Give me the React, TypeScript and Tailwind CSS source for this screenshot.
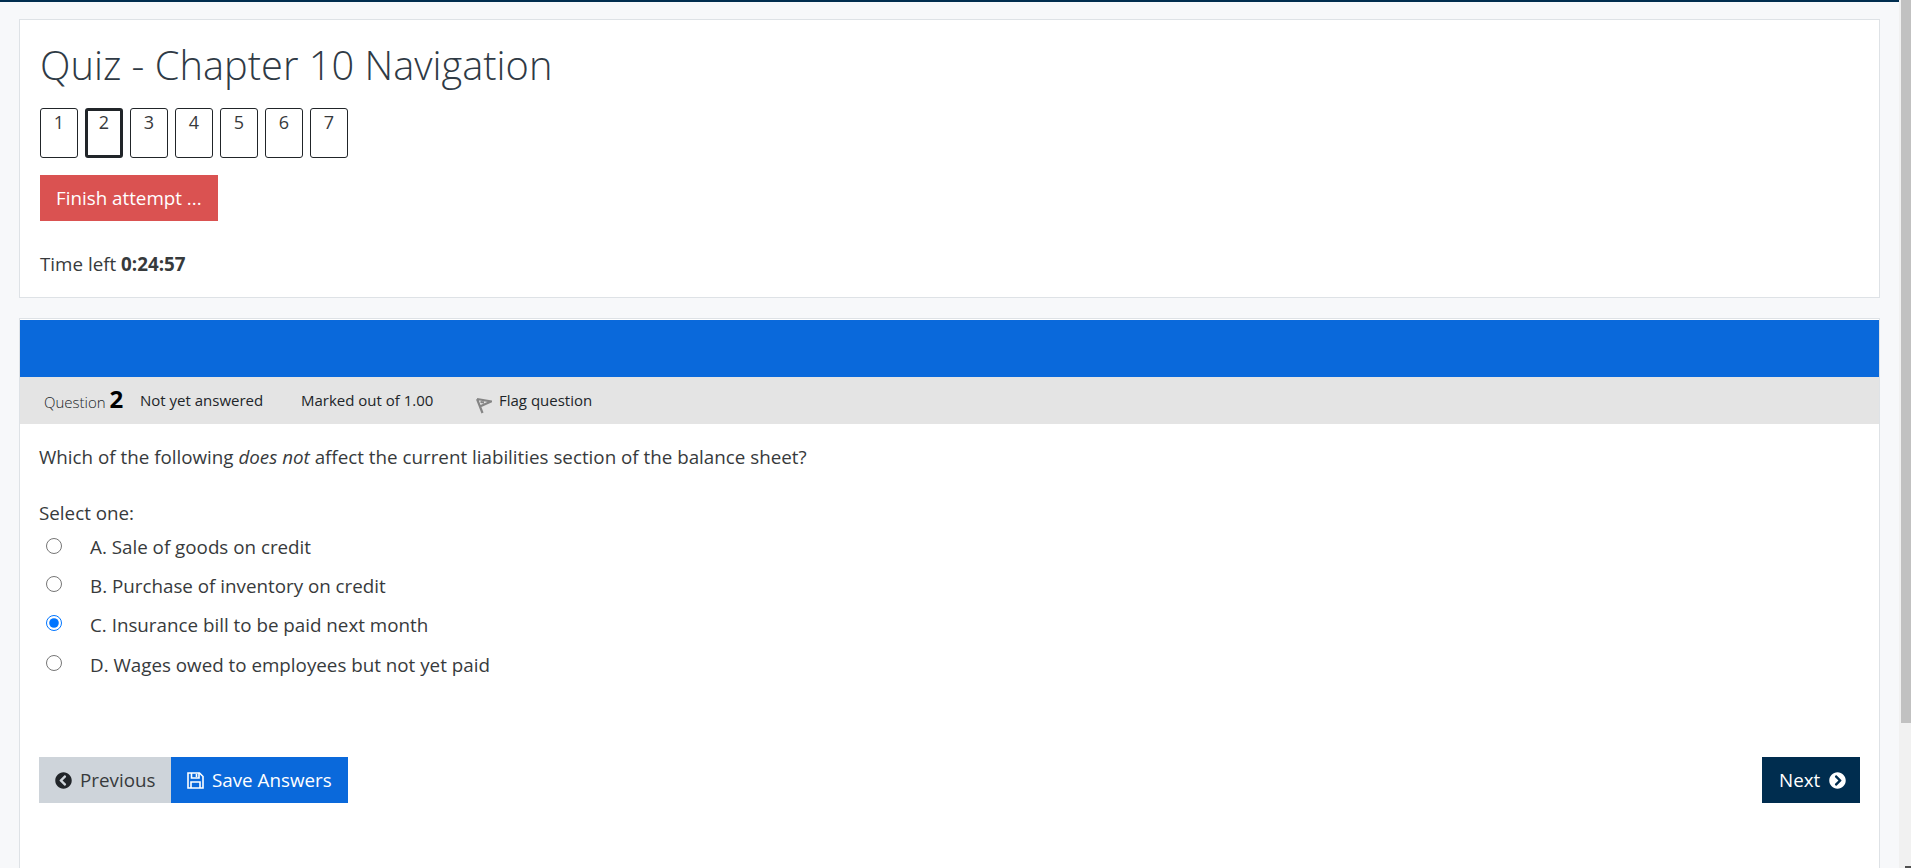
import { FaChevronCircleLeft, FaChevronCircleRight } from 'react-icons/fa';

const pages = [1, 2, 3, 4, 5, 6, 7];

const options = [
  { text: 'A. Sale of goods on credit', rowClass: 'h-[38px]', textClass: 'pt-[3px]' },
  { text: 'B. Purchase of inventory on credit', rowClass: 'h-[38px]', textClass: 'pt-[5px]' },
  { text: 'C. Insurance bill to be paid next month', rowClass: 'h-[40px]', textClass: 'pt-[5px]', checked: true },
  { text: 'D. Wages owed to employees but not yet paid', rowClass: 'h-[40px]', textClass: 'pt-[4px]' },
];

function FlagIcon() {
  return (
    <svg width="16" height="17" viewBox="0 0 16 17" className="mt-[10px]">
      <path d="M1 2 L15 4.5 L5 9 M1 2 L6.5 16 M4.5 5 L8 5.5" fill="none" stroke="#858585" strokeWidth="2.2" />
    </svg>
  );
}

function SaveIcon() {
  return (
    <svg width="17" height="17" viewBox="0 0 17 17" fill="none" stroke="white" strokeWidth="1.6">
      <path d="M1 1 H12.5 L16 4.5 V16 H1 Z" />
      <path d="M4.5 1 V6 H12 V1 M9.5 2 V5" />
      <path d="M4 16 V10 H13 V16" />
    </svg>
  );
}

export default function App() {
  return (
    <div className="flex h-[868px] overflow-hidden bg-[#f7f8fa] font-['Open_Sans',sans-serif] text-[18.8px] text-[#373a3c]">
      <div className="w-[1899px] shrink-0">
        <div className="h-[2px] bg-[#002d4f]" />
        <div className="px-[19px] pt-[17px]">
          <section className="h-[279px] border border-[#dee2e6] bg-white pl-[20px] pt-[17px]">
            <h1 className="text-[39.8px] leading-[56px] font-light text-[#2f3a45]">Quiz - Chapter 10 Navigation</h1>
            <div className="mt-[15px] flex gap-[7px]">
              {pages.map((n) => (
                <div
                  key={n}
                  className={`h-[50px] w-[38px] rounded-[3px] border-[#212529] text-center text-[18px] ${n === 2 ? 'border-[3px] leading-[22px]' : 'border leading-[26px]'}`}
                >
                  {n}
                </div>
              ))}
            </div>
            <button className="mt-[17px] block h-[46px] w-[178px] bg-[#da5251] pl-[16px] text-left text-white">Finish attempt ...</button>
            <p className="mt-[29px] leading-[28px]">
              Time left <b className="font-bold">0:24:57</b>
            </p>
          </section>

          <section className="mt-[20px] h-[600px] border-x border-t border-[#dee2e6] bg-white pt-px">
            <div className="h-[57px] bg-[#0a69db]" />
            <div className="flex h-[47px] items-center bg-[#e4e4e4] text-[15px] text-[#212529]">
              <span className="ml-[24px] flex w-[96px] items-baseline gap-[4px] font-light">
                Question <b className="text-[24px] leading-none font-bold text-black">2</b>
              </span>
              <span className="w-[161px]">Not yet answered</span>
              <span className="w-[175px]">Marked out of 1.00</span>
              <FlagIcon />
              <span className="ml-[7px]">Flag question</span>
            </div>
            <div className="px-[19px]">
              <p className="mt-[19px] leading-[28px]">
                Which of the following <em>does not</em> affect the current liabilities section of the balance sheet?
              </p>
              <p className="mt-[28px] leading-[28px]">Select one:</p>
              <div>
                {options.map((o) => (
                  <label key={o.text} className={`flex items-center ${o.rowClass}`}>
                    <input type="radio" name="answer" defaultChecked={o.checked} className="ml-[7px] h-[16px] w-[16px] shrink-0" />
                    <span className={`ml-[28px] ${o.textClass}`}>{o.text}</span>
                  </label>
                ))}
              </div>
              <div className="mt-[74px] flex h-[46px] justify-between">
                <div className="flex">
                  <button className="flex w-[132px] items-center gap-[8px] bg-[#ced4da] pl-[16px]">
                    <FaChevronCircleLeft className="h-[17px] w-[17px] text-[#212529]" />
                    Previous
                  </button>
                  <button className="flex w-[177px] items-center gap-[8px] bg-[#0a69db] pl-[16px] text-white">
                    <SaveIcon />
                    Save Answers
                  </button>
                </div>
                <button className="flex w-[98px] items-center gap-[9px] bg-[#002d4f] pl-[17px] text-white">
                  Next
                  <FaChevronCircleRight className="h-[17px] w-[17px]" />
                </button>
              </div>
            </div>
          </section>
        </div>
      </div>
      <aside className="relative flex-1 bg-[#f1f1f1]">
        <div className="ml-[2px] h-[723px] bg-[#c1c1c1]" />
        <div className="absolute bottom-0 right-0 h-[2px] w-[6px] bg-[#505050]" />
      </aside>
    </div>
  );
}
